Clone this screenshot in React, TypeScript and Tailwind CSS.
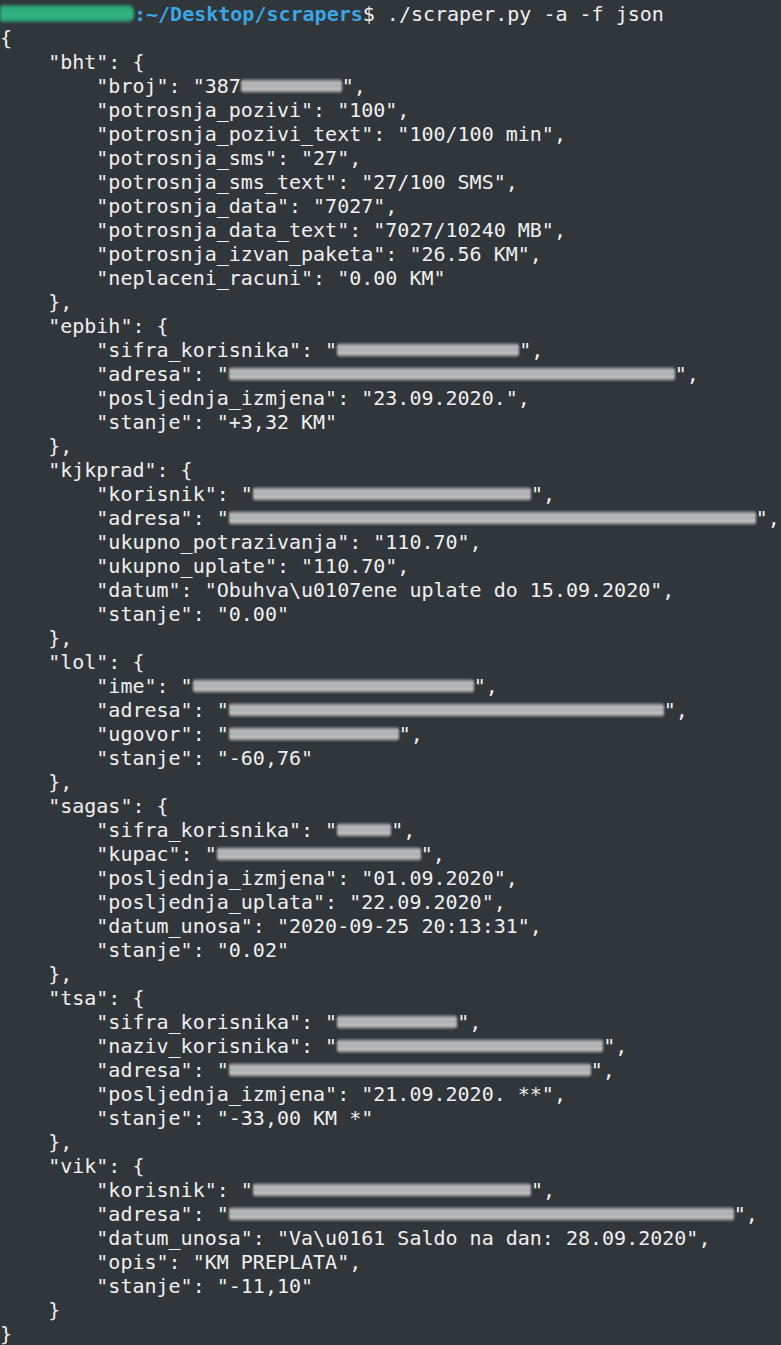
import React from "react";

type Part = string | number;

// numbers are redacted (blurred) spans, value = width in px
const lines: Part[][] = [
  ["{"],
  ['    "bht": {'],
  ['        "broj": "387', 101, '",'],
  ['        "potrosnja_pozivi": "100",'],
  ['        "potrosnja_pozivi_text": "100/100 min",'],
  ['        "potrosnja_sms": "27",'],
  ['        "potrosnja_sms_text": "27/100 SMS",'],
  ['        "potrosnja_data": "7027",'],
  ['        "potrosnja_data_text": "7027/10240 MB",'],
  ['        "potrosnja_izvan_paketa": "26.56 KM",'],
  ['        "neplaceni_racuni": "0.00 KM"'],
  ["    },"],
  ['    "epbih": {'],
  ['        "sifra_korisnika": "', 182, '",'],
  ['        "adresa": "', 446, '",'],
  ['        "posljednja_izmjena": "23.09.2020.",'],
  ['        "stanje": "+3,32 KM"'],
  ["    },"],
  ['    "kjkprad": {'],
  ['        "korisnik": "', 278, '",'],
  ['        "adresa": "', 527, '",'],
  ['        "ukupno_potrazivanja": "110.70",'],
  ['        "ukupno_uplate": "110.70",'],
  ['        "datum": "Obuhva\\u0107ene uplate do 15.09.2020",'],
  ['        "stanje": "0.00"'],
  ["    },"],
  ['    "lol": {'],
  ['        "ime": "', 281, '",'],
  ['        "adresa": "', 435, '",'],
  ['        "ugovor": "', 170, '",'],
  ['        "stanje": "-60,76"'],
  ["    },"],
  ['    "sagas": {'],
  ['        "sifra_korisnika": "', 54, '",'],
  ['        "kupac": "', 204, '",'],
  ['        "posljednja_izmjena": "01.09.2020",'],
  ['        "posljednja_uplata": "22.09.2020",'],
  ['        "datum_unosa": "2020-09-25 20:13:31",'],
  ['        "stanje": "0.02"'],
  ["    },"],
  ['    "tsa": {'],
  ['        "sifra_korisnika": "', 120, '",'],
  ['        "naziv_korisnika": "', 266, '",'],
  ['        "adresa": "', 362, '",'],
  ['        "posljednja_izmjena": "21.09.2020. **",'],
  ['        "stanje": "-33,00 KM *"'],
  ["    },"],
  ['    "vik": {'],
  ['        "korisnik": "', 278, '",'],
  ['        "adresa": "', 505, '",'],
  ['        "datum_unosa": "Va\\u0161 Saldo na dan: 28.09.2020",'],
  ['        "opis": "KM PREPLATA",'],
  ['        "stanje": "-11,10"'],
  ["    }"],
  ["}"],
];

function Smudge({ w }: { w: number }) {
  return (
    <span
      className="inline-block align-middle h-[14px] -mt-[3px] rounded-[3px] bg-[linear-gradient(to_bottom,#5f6366,#a6a8aa_18%,#c4c5c6_35%,#9c9ea0_52%,#cfcfcf_68%,#9fa1a3_84%,#5f6366)] blur-[0.8px]"
      style={{ width: w }}
    />
  );
}

export default function App() {
  return (
    <div className="min-h-screen overflow-hidden bg-[#31363b] pt-[2px] text-[#eff0f1] font-['DejaVu_Sans_Mono','Liberation_Mono',monospace] text-[20px] leading-[24px] whitespace-pre">
      <div className="h-[24px]">
        <span className="inline-block align-middle h-[17px] w-[134px] -mt-[4px] rounded-r-[6px] bg-[linear-gradient(to_bottom,#2d8f6c,#2bb07d_30%,#31b784_65%,#2a8f6d)] blur-[1.5px]" />
        <span className="font-bold text-[#3aa6e5]">:~/Desktop/scrapers</span>
        <span>$ ./scraper.py -a -f json</span>
      </div>
      {lines.map((parts, i) => (
        <div key={i} className="h-[24px]">
          {parts.map((p, j) =>
            typeof p === "number" ? <Smudge key={j} w={p} /> : <span key={j}>{p}</span>
          )}
        </div>
      ))}
    </div>
  );
}
